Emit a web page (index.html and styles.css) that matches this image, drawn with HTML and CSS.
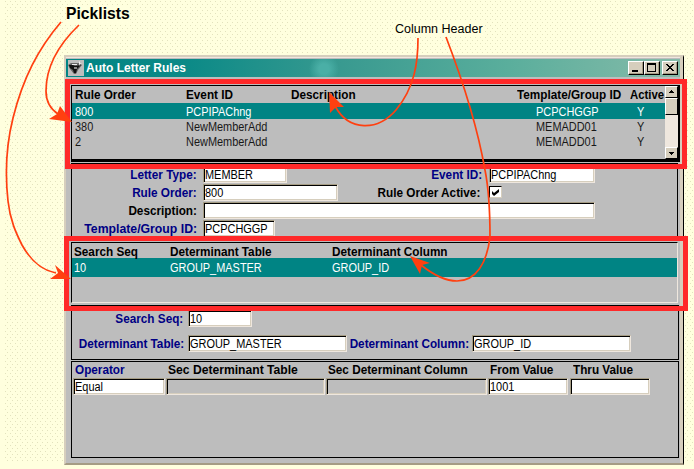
FILE: index.html
```html
<!DOCTYPE html>
<html lang="en">
<head>
<meta charset="utf-8">
<title>Auto Letter Rules</title>
<link rel="stylesheet" href="styles.css">
</head>
<body>
<main class="window">
  <header class="titlebar">
    <svg class="app-icon" width="16" height="16" viewBox="0 0 16 16"><path fill="#bdbdbd" d="M0 0h16v16H0z"/><path fill="#666" d="M0 5l3-2 8 0 3 2-4 5-2 4-2 0-4-5z"/><path fill="#111" d="M1 5l4 0 2 1 6-1-4 4-1 4-2 0-1-3-3-2z"/><path fill="#eee" d="M11 2l1-1 0 2 2 1-2 0-1 2zM4 4h5v1H4z"/><path fill="#888" d="M6 7h3v2H6z"/></svg>
    <h1 class="bold"><span>Auto Letter Rules</span></h1>
    <div class="buttons">
      <button><svg width="14" height="12"><path d="M3 8h6v2H3z"/></svg></button>
      <button><svg width="14" height="12"><path fill-rule="evenodd" d="M2 1h9v9H2zM3 3v6h7V3z"/></svg></button>
      <button class="close"><svg width="14" height="12"><path d="M3 2h2v1h1v1h2V3h1V2h2v1h-1v1H9v1H8v1h1v1h1v1h1v1H9V8H8V7H6v1H5v1H3V8h1V7h1V6h1V5H5V4H4V3H3z"/></svg></button>
    </div>
  </header>

  <section class="rules">
    <div class="rules-table">
      <div class="row head bold"><span>Rule Order</span><span>Event ID</span><span>Description</span><span>Template/Group ID</span><span>Active</span></div>
      <div class="row selected"><span>800</span><span>PCPIPAChng</span><span></span><span>PCPCHGGP</span><span>Y</span></div>
      <div class="row"><span>380</span><span>NewMemberAdd</span><span></span><span>MEMADD01</span><span>Y</span></div>
      <div class="row"><span>2</span><span>NewMemberAdd</span><span></span><span>MEMADD01</span><span>Y</span></div>
    </div>
    <div class="scrollbar">
      <i class="arrow"><svg width="9" height="8"><path d="M4 2h1v1h1v1h1v1H2V4h1V3h1z"/></svg></i>
      <i class="thumb"></i>
      <i class="arrow down"><svg width="9" height="8"><path d="M2 3h5v1H6v1H5v1H4V5H3V4H2z"/></svg></i>
    </div>
  </section>

  <section class="form">
    <div class="line"><label class="bold navy l1"><span>Letter Type:</span></label><div class="field w84"><span>MEMBER</span></div><label class="bold navy l2 event"><span>Event ID:</span></label><div class="field w106"><span>PCPIPAChng</span></div></div>
    <div class="line"><label class="bold navy l1"><span>Rule Order:</span></label><div class="field w135"><span>800</span></div><label class="bold l2 active"><span>Rule Order Active:</span></label><div class="check"><svg width="9" height="9"><path d="M1 3l2 2 5-4v3L3 8 1 6z"/></svg></div></div>
    <div class="line"><label class="bold l1"><span>Description:</span></label><div class="field w392"></div></div>
    <div class="line"><label class="bold navy l1 wide"><span>Template/Group ID:</span></label><div class="field w72"><span>PCPCHGGP</span></div></div>
  </section>

  <section class="determinants">
    <div class="drow head bold"><span>Search Seq</span><span>Determinant Table</span><span>Determinant Column</span></div>
    <div class="drow selected"><span>10</span><span>GROUP_MASTER</span><span>GROUP_ID</span></div>
  </section>

  <section class="detail">
    <div class="line"><label class="bold navy l3"><span>Search Seq:</span></label><div class="field w64"><span>10</span></div></div>
    <div class="line"><label class="bold navy l3"><span>Determinant Table:</span></label><div class="field w159"><span>GROUP_MASTER</span></div><label class="bold navy l4"><span>Determinant Column:</span></label><div class="field w159"><span>GROUP_ID</span></div></div>
  </section>

  <section class="criteria">
    <div class="grid bold"><span class="navy">Operator</span><span class="wide-text">Sec Determinant Table</span><span>Sec Determinant Column</span><span>From Value</span><span>Thru Value</span></div>
    <div class="grid inputs"><div class="field"><span>Equal</span></div><div class="field off"></div><div class="field off"></div><div class="field"><span>1001</span></div><div class="field"></div></div>
  </section>
</main>

<div class="frame first"></div>
<div class="frame second"></div>
<div class="note picklists">Picklists</div>
<div class="note column">Column Header</div>
<svg class="arrows" width="694" height="469" viewBox="0 0 694 469">
  <g fill="none" stroke="#ff4010" stroke-width="1.7">
    <path d="M61 22C38 49 23 78 13 118C6 146 5 174 8 201C10 220 16 233 22 245C31 261 41 270 56 273"/>
    <path d="M79 25C56 47 46 70 46 91Q46 106 58 114"/>
    <path d="M418 38C418 62 415 87 396 110C378 131 349 132 335 106"/>
    <path d="M446 37C464 84 478 130 485 170C490 195 490 220 490 237C487 263 476 281 457 281Q441 281 421 265"/>
  </g>
  <g fill="#ff4010">
    <path d="M71 279L55 265L58 273L50 279Z"/>
    <path d="M72 122L60 106L57 114L49 119Z"/>
    <path d="M329 92L344 107L336 107L330 113Z"/>
    <path d="M410 256L430 263L422 265L420 274Z"/>
  </g>
</svg>
</body>
</html>
```

FILE: styles.css
```css
* { box-sizing: border-box; }

body {
  margin: 0;
  width: 694px;
  height: 469px;
  overflow: hidden;
  position: relative;
  padding: 55px 0 0 64px;
  font: 12.5px/15px "Liberation Sans", Arial, sans-serif;
  color: #000;
  background:
    linear-gradient(#ffffde, #ffffde) 0 463px / 694px 6px no-repeat,
    linear-gradient(#ffffde, #ffffde) 0 0 / 4px 469px no-repeat,
    conic-gradient(from 270deg at 1px 1px, #e2e2bd 90deg, transparent 0) 5px 1px / 5px 6px,
    conic-gradient(from 270deg at 1px 1px, #e2e2bd 90deg, transparent 0) 7px 4px / 5px 6px,
    #ffffde;
}

.window {
  width: 620px;
  height: 410px;
  background: #bdbdbd;
  border: 2px solid #d6cebd;
  border-right: 1px solid #000;
  border-bottom: 2px solid #a59c84;
  box-shadow: inset -3px 0 #d6cebd, inset 0 1px #efe7de;
  padding: 2px 3px 0 0;
}

span {
  display: inline-block;
  white-space: nowrap;
  transform: scaleX(.875);
  transform-origin: 0 50%;
}

.bold { font-weight: bold; font-size: 12.5px; }
.bold span { transform: scaleX(.94); }
.bold .wide-text { transform: scaleX(.97); }
.navy { color: #000084; }

.titlebar {
  height: 18px;
  display: flex;
  align-items: center;
  padding: 0 2px;
  background:
    radial-gradient(circle at 258px 10px, #4aafa6 0 5px, transparent 15px),
    linear-gradient(90deg, #008484, #0c8a87 20%, #399a90 45%, #5aae9c 72%, #86bba9);
}

h1 { margin: 0 0 0 2px; line-height: 18px; color: #fff; }
h1.bold span { transform: scaleX(.96); }
.buttons { margin-left: auto; display: flex; }

button {
  width: 16px;
  height: 14px;
  padding: 0;
  border: 1px solid;
  border-color: #fff #000 #000 #fff;
  border-radius: 0;
  background: #d6cebd;
  box-shadow: inset -1px -1px #a59c84;
}

button svg { display: block; }
.close { margin-left: 2px; }

.rules {
  height: 77px;
  width: 609px;
  margin: 8px 0 0 5px;
  display: flex;
  border: 1px solid #000;
  border-right-width: 2px;
  border-bottom-width: 3px;
}

.rules-table { width: 593px; overflow: hidden; }

.row {
  display: grid;
  grid-template-columns: 111px 105px 226px 113px 38px;
  height: 15px;
  line-height: 16px;
  padding-left: 3px;
  color: #181818;
}

.row.head { height: 17px; line-height: 18px; color: #000; }
.row.selected { height: 16px; line-height: 18px; }
.row.head span:last-child { justify-self: start; transform: scaleX(.91); }
.row:not(.head) span:nth-child(4) { margin-left: 19px; }
.row:not(.head) span:nth-child(5) { margin-left: 7px; }
.row.selected, .drow.selected { background: #008484; color: #fff; }

.scrollbar {
  width: 13px;
  background: #efe7de;
  display: flex;
  flex-direction: column;
}

.arrow, .thumb {
  background: #d6cebd;
  border: 1px solid;
  border-color: #fff #000 #000 #fff;
}

.arrow { height: 12px; padding: 1px; }
.arrow svg { display: block; }
.thumb { height: 17px; }
.down { margin-top: auto; }

.form {
  width: 607px;
  height: 74px;
  margin: 1px 0 0 5px;
  padding-top: 2px;
  border: 1px solid #000;
  border-width: 1px 1px 0;
}

.line { display: flex; height: 18px; }
.line label { display: block; text-align: right; line-height: 18px; }
.line label span { transform-origin: 100% 50%; }
.l1 { width: 125px; margin-right: 6px; }
.l1.wide span { transform: scaleX(.98); }
.l3 { width: 111px; margin-right: 5px; }
.l4 { width: 122px; margin-right: 3px; display: flex !important; justify-content: flex-end; }
.event { width: 195px; margin-right: 7px; }
.active { width: 142px; margin-right: 9px; }

.field {
  height: 17px;
  padding-left: 1px;
  line-height: 17px;
  background: #fff;
  border: 1px solid;
  border-color: #a59c84 #efe7de #efe7de #a59c84;
  box-shadow: inset 1px 1px #000, inset -1px -1px #d6cebd;
}

.w64 { width: 64px; }
.w72 { width: 72px; }
.w84 { width: 84px; }
.w106 { width: 106px; }
.w135 { width: 135px; }
.w159 { width: 159px; }
.w392 { width: 392px; }

.check {
  width: 13px;
  height: 12px;
  margin-top: 2px;
  padding: 1px;
  background: #fff;
  border: 1px solid;
  border-color: #000 #d6cebd #d6cebd #000;
}

.check svg { display: block; }

.determinants {
  width: 607px;
  height: 61px;
  margin: 5px 0 0 5px;
  border: 1px solid;
  border-color: #000 #efe7de #efe7de #000;
}

.drow {
  display: grid;
  grid-template-columns: 96px 162px 200px;
  height: 19px;
  line-height: 21px;
  padding-left: 2px;
}

.drow.head { height: 15px; line-height: 18px; }

.detail {
  width: 608px;
  height: 55px;
  margin: 2px 0 0 5px;
  padding-top: 4px;
  border: 1px solid #000;
}

.detail .line + .line { margin-top: 7px; }

.criteria {
  width: 608px;
  height: 97px;
  margin: 1px 0 0 5px;
  border: 1px solid #000;
}

.grid {
  display: grid;
  grid-template-columns: 92px 159px 161px 80px 80px;
  column-gap: 1px;
  padding-left: 1px;
  height: 16px;
  line-height: 17px;
}

.inputs .field:last-child { margin: 0 -1px 0 1px; }
.grid > span { margin-left: 2px; }
.grid > span:last-child { margin-left: 4px; }
.off { background: #bdbdbd; }

.frame {
  position: absolute;
  border: 5px solid #ff2929;
}

.first { left: 65px; top: 79px; width: 622px; height: 90px; }
.second { left: 64px; top: 236px; width: 624px; height: 75px; }

.note { position: absolute; white-space: nowrap; background: #ffffde; }

.picklists {
  left: 66px;
  top: 5px;
  font-size: 15.7px;
  line-height: 18px;
  font-weight: bold;
}

.column { left: 395px; top: 22px; font-size: 12.5px; }
.arrows { position: absolute; left: 0; top: 0; }
```
